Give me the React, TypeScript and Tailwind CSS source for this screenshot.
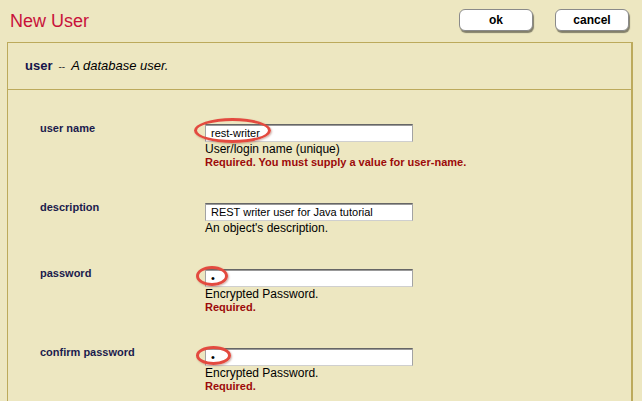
const sans = { fontFamily: '"Liberation Sans", Arial, sans-serif' };

type Field = {
  label: string;
  value: string;
  help: string;
  error?: string;
  mark?: string;
};

const fields: Field[] = [
  {
    label: "user name",
    value: "rest-writer",
    help: "User/login name (unique)",
    error: "Required. You must supply a value for user-name.",
    mark: "left-[-11px] top-[-6px] h-[25px] w-[77px]",
  },
  {
    label: "description",
    value: "REST writer user for Java tutorial",
    help: "An object's description.",
  },
  {
    label: "password",
    value: "•",
    help: "Encrypted Password.",
    error: "Required.",
    mark: "left-[-9px] top-[-3px] h-[20px] w-[32px]",
  },
  {
    label: "confirm password",
    value: "•",
    help: "Encrypted Password.",
    error: "Required.",
    mark: "left-[-9px] top-[-2px] h-[19px] w-[35px]",
  },
];

function Button({ children }: { children: string }) {
  return (
    <button
      type="button"
      className="h-[22px] w-[74px] rounded-[6px] border border-[#8a8a8a] bg-white text-[12px] font-bold text-black shadow-[1px_2px_1px_rgba(0,0,0,0.45)]"
      style={sans}
    >
      {children}
    </button>
  );
}

function FieldRow({ field }: { field: Field }) {
  return (
    <div className="flex items-start py-4">
      <div className="w-[165px] shrink-0 text-[11px] font-bold leading-[13px] text-[#1b1b4d]">
        {field.label}
      </div>
      <div className="flex flex-col pt-[2px]">
        <div className="relative">
          <div className="flex h-[18px] w-[208px] items-center border border-[#a3a3a3] border-t-[#666] border-b-[#cfcfcf] bg-white pl-[5px] text-[11px] text-black shadow-[inset_0_1px_0_#999]">
            {field.value}
          </div>
          {field.mark ? (
            <div
              className={`absolute rounded-[50%] border-[3px] border-[#e34a3f] shadow-[1px_1px_2px_rgba(120,40,20,0.35)] ${field.mark}`}
            />
          ) : null}
        </div>
        <div className="mt-[1px] text-[12px] leading-[13px] text-black">
          {field.help}
        </div>
        {field.error ? (
          <div className="text-[11px] font-bold leading-[13px] text-[#9c0a0a]">
            {field.error}
          </div>
        ) : null}
      </div>
    </div>
  );
}

export default function App() {
  return (
    <div className="h-[401px] w-[642px] overflow-hidden bg-[#ede7c1]" style={sans}>
      <div className="flex h-[42px] items-start justify-between pl-[10px] pr-[13px]">
        <h1 className="pt-[10px] text-[18px] leading-[22px] text-[#c8113a]">New User</h1>
        <div className="flex gap-[22px] pt-[9px]">
          <Button>ok</Button>
          <Button>cancel</Button>
        </div>
      </div>
      <div className="ml-[7px] w-[626px] border-l border-r-2 border-t border-[#bcaa5c]">
        <div className="flex h-[47px] items-center gap-[6px] border-b border-[#bcaa5c] pl-[17px] text-[13px]">
          <span className="font-bold text-[#14144a]">user</span>
          <span className="text-[10px] text-[#333]">--</span>
          <span className="italic text-black">A database user.</span>
        </div>
        <div className="pl-[32px] pt-4">
          {fields.map((f) => (
            <FieldRow key={f.label} field={f} />
          ))}
        </div>
      </div>
    </div>
  );
}
